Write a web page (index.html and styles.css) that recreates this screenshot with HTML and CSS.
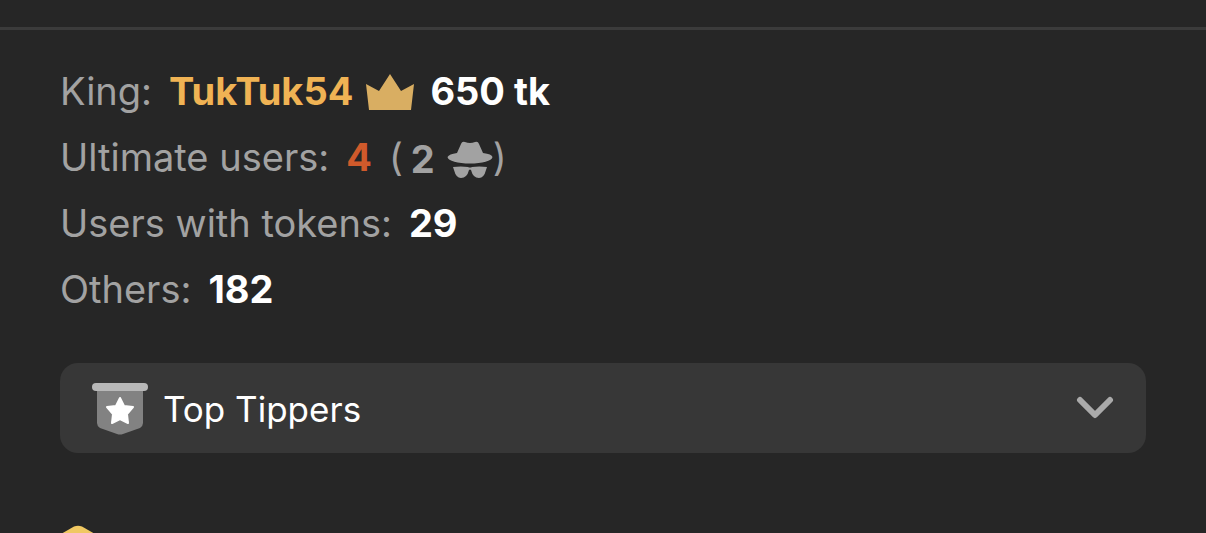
FILE: index.html
```html
<!DOCTYPE html>
<html lang="en">
<head>
<meta charset="utf-8">
<title>Room users</title>
<link rel="stylesheet" href="styles.css">
</head>
<body>
<main class="panel">
  <section class="stats">
    <p class="stat"><span>King:</span><span class="king"><b>TukTuk54</b><svg class="crown" viewBox="0 0 50 38" aria-hidden="true"><path d="M1 12 14 19 25 2 36 19 49 12 46 38H4Z" fill="#d9ae62"/></svg></span><b class="value">650 tk</b></p>
    <p class="stat"><span>Ultimate users:</span><b class="ultimate">4</b><span class="hidden-users">(<span class="count"><b>2</b><svg class="spy" viewBox="0 0 46 38" aria-hidden="true"><path d="M10 13 14 4Q15 1 18 2Q23 4 28 2Q31 1 32 4L36 13Q45 14 45.500 17C45 21 35 23.500 23 23.500S1 21 .500 17Q2 14 10 13ZM6 27Q14 26 21 27Q23 28 25 27Q32 26 40 27L39 30Q37 38 32 38Q26 38 24 30Q23 29 22 30Q20 38 14 38Q9 38 7 30Z" fill="#a2a2a2"/></svg></span>)</span></p>
    <p class="stat"><span>Users with tokens:</span><b class="value">29</b></p>
    <p class="stat"><span>Others:</span><b class="value">182</b></p>
  </section>
  <button class="tippers" type="button" aria-expanded="false">
    <svg class="badge" viewBox="0 0 56 54" aria-hidden="true"><path d="M5 7H51V42Q51 45 48 47L31 53Q28 54 25 53L8 47Q5 45 5 42Z" fill="#828282"/><rect y="2" width="56" height="8" rx="4" fill="#b8b8b8"/><path d="m28 17 4 8 9 1-6 7 1 9-8-4-8 4 1-9-6-7 9-1Z" fill="#fff" stroke="#fff" stroke-width="2" stroke-linejoin="round"/></svg>
    <span class="label">Top Tippers</span>
    <svg class="chevron" viewBox="0 0 38 24" aria-hidden="true"><path d="M4 4 19 19 34 4" fill="none" stroke="#aaa" stroke-width="6" stroke-linecap="round" stroke-linejoin="round"/></svg>
  </button>
  <svg class="level" viewBox="0 0 36 8" aria-hidden="true"><path d="M1 9 14 1.500Q18 0 22 1.500L35 9Z" fill="#f0c862"/></svg>
</main>
</body>
</html>
```
FILE: styles.css
```css
* { box-sizing: border-box; }
body { margin: 0; background: #262626; color: #a2a2a2; font: 38px/66px Inter, sans-serif; }
svg { display: block; flex: none; }
.panel { margin-top: 27px; border-top: 3px solid #3b3b3b; padding: 28px 60px 0; }
.stat { display: flex; align-items: center; gap: 17px; margin: 0; }
.king { display: flex; align-items: center; gap: 12px; color: #f0b354; }
.value { color: #fff; }
.king + .value { margin-left: -2px; }
.ultimate { color: #d05a2b; }
.crown { width: 50px; height: 38px; }
.hidden-users { display: flex; align-items: center; }
.count { display: flex; align-items: center; gap: 12px; padding: 4px 0 0 8px; line-height: 62px; }
.spy { width: 46px; height: 38px; }
.tippers { display: flex; align-items: center; gap: 15px; width: 100%; height: 90px; margin-top: 41px; padding: 0 32px; border: 0; border-radius: 18px; background: #373737; color: #fff; font: 35px/48px Inter, sans-serif; }
.badge { width: 56px; height: 54px; }
.label { padding-top: 2px; }
.chevron { width: 38px; height: 24px; margin-left: auto; }
.level { width: 36px; height: 8px; margin-top: 72px; }
```
